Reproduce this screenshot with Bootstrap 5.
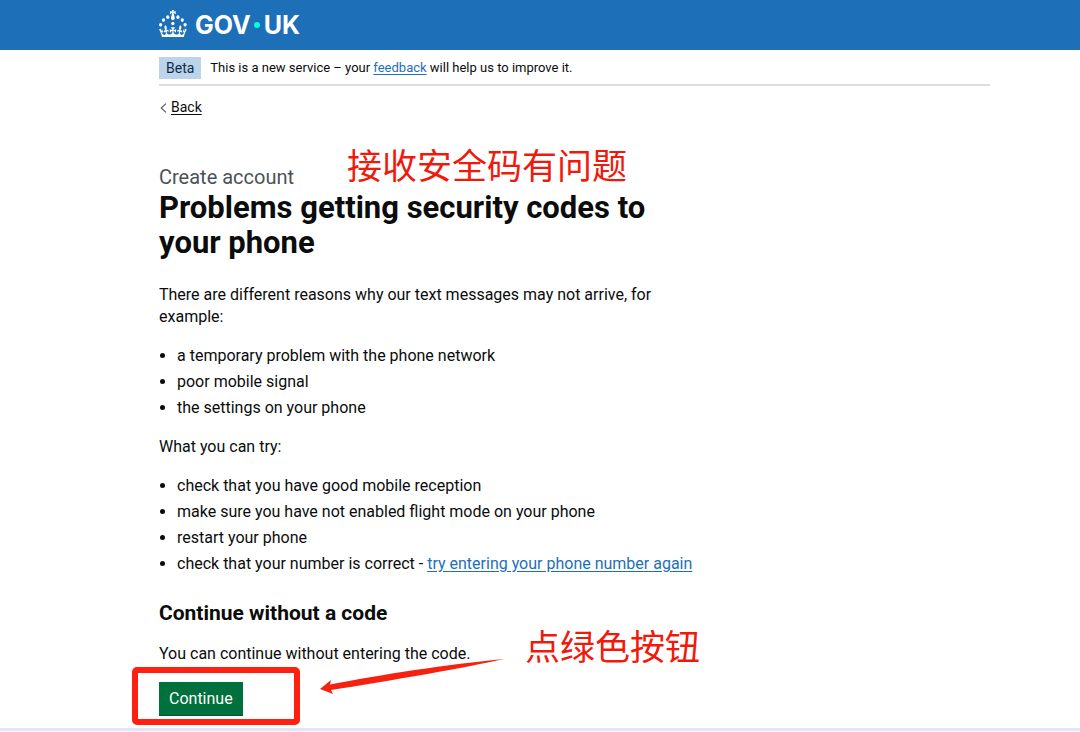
<!DOCTYPE html>
<html lang="en">
<head>
<meta charset="utf-8">
<meta name="viewport" content="width=device-width, initial-scale=1">
<title>Problems getting security codes to your phone – GOV.UK</title>
<link href="https://cdn.jsdelivr.net/npm/bootstrap@5.3.0/dist/css/bootstrap.min.css" rel="stylesheet">
<style>
  body { font-family: Roboto, "Noto Sans CJK SC", sans-serif; font-size: 16px; line-height: 22px; color: #0b0c0c; background: #fff; }
  a { color: #1d70b8; text-underline-offset: 2px; }
  .page-width { padding-left: 159px; padding-right: 90px; }
  .site-header { background: #1d70b8; height: 50px; }
  .site-logo { font: bold 25px/30px Inter, sans-serif; color: #fff; gap: 8px; }
  .site-logo svg { margin-bottom: 4px; }
  .logo-dot { width: 6px; height: 6px; background: #00ffe0; margin: 0 4px 0 3px; }
  .phase-banner { font-size: 13px; padding: 7px 0 5px; gap: 9px; border-bottom: 2px solid #dcdddd; }
  .phase-tag { background: #bbd4ea; color: #0c2d4a; font-size: 14px; padding: 0 7px; }
  .back-link { color: #0b0c0c; font-size: 14px; }
  .back-link svg { margin: 0 4px 0 1px; }
  .content-column { max-width: 530px; }
  .lead-caption { font-size: 20px; line-height: 26px; color: #4c5257; margin-top: 46px; }
  .page-title { font-size: 31px; line-height: 35px; font-weight: 700; max-width: 500px; margin-bottom: 24px; }
  .content-column p, .content-column ul { margin-bottom: 17px; }
  .intro-text { max-width: 500px; }
  .content-column ul { padding-left: 18px; }
  .content-column li + li { margin-top: 4px; }
  .section-title { font-size: 21px; line-height: 26px; font-weight: 700; padding-top: 8px; margin-bottom: 17px; }
  .btn-continue { --bs-btn-bg: #00703c; --bs-btn-color: #fff; --bs-btn-hover-bg: #005a30; --bs-btn-hover-color: #fff; --bs-btn-padding-x: 10px; --bs-btn-padding-y: 5px; --bs-btn-font-size: 16px; --bs-btn-line-height: 23px; --bs-btn-border-width: 0; box-shadow: 0 1px 0 #00542d; }
  .callout-box { left: -27px; top: -15px; width: 168px; height: 58px; border: 6px solid #fe2010; border-radius: 5px; pointer-events: none; }
  .callout-arrow { left: 160px; top: -26px; }
  .callout-note { font: 35px/40px "Noto Sans CJK SC", sans-serif; color: #f01a0c; white-space: nowrap; }
  .note-title { left: 188px; top: -20px; }
  .note-button { left: 366px; top: -57px; }
  .page-end { margin-top: 13px; height: 4px; background: #e3e7f5; border-bottom: 1px solid #f4f6fc; }
</style>
</head>
<body>
<header class="site-header page-width d-flex align-items-center">
  <a href="#" class="site-logo d-flex align-items-center text-decoration-none" aria-label="GOV.UK">
    <svg width="28" height="27" viewBox="0 3 64 55" fill="#fff" preserveAspectRatio="none" aria-hidden="true">
      <circle cx="20" cy="17.6" r="3.7"/><circle cx="10.2" cy="23.5" r="3.7"/><circle cx="3.7" cy="33.2" r="3.7"/><circle cx="31.7" cy="30.6" r="3.7"/><circle cx="43.3" cy="17.6" r="3.7"/><circle cx="53.2" cy="23.5" r="3.7"/><circle cx="59.7" cy="33.2" r="3.7"/>
      <path d="M33.1,9.8c.2-.1.3-.3.5-.5l4.6,2.4v-6.8l-4.6,1.5c-.1-.2-.3-.3-.5-.5l1.9-5.9h-6.7l1.9,5.9c-.2.1-.3.3-.5.5l-4.6-1.5v6.8l4.6-2.4c.1.2.3.3.5.5l-2.6,8c-.9,2.8,1.2,5.7,4.1,5.7h0c3,0,5.1-2.9,4.1-5.7l-2.6-8ZM37,37.9s-3.4,3.8-4.1,6.1c2.2,0,4.2-.5,6.4-2.8l-.7,8.5c-2-2.8-4.4-4.1-5.7-3.8.1,3.1.5,6.7,5.8,7.2,3.7.3,6.7-1.5,7-3.8.4-2.6-2-4.3-3.7-1.6-1.4-4.5,2.4-6.1,4.9-3.2-1.9-4.5-1.8-7.7,2.4-10.9,3,4,2.6,7.3-1.2,11.1,2.4-1.3,6.2,0,4,4.6-1.2-2.8-3.7-2.2-4.2.2-.3,1.7.7,3.7,3,4.2,1.9.3,4.7-.9,7-5.9-1.3,0-2.4.7-3.9,1.7l2.4-8c.6,2.3,1.4,3.7,2.2,4.5.6-1.6.5-2.8,0-5.3l5,1.8c-2.6,3.6-5.2,8.7-7.3,17.5-7.4-1.1-15.7-1.7-24.5-1.7h0c-8.8,0-17.1.6-24.5,1.7-2.1-8.9-4.7-13.9-7.3-17.5l5-1.8c-.5,2.5-.6,3.7,0,5.3.8-.8,1.6-2.3,2.2-4.5l2.4,8c-1.5-1-2.6-1.7-3.9-1.7,2.3,5,5.2,6.2,7,5.9,2.3-.4,3.3-2.4,3-4.2-.5-2.4-3-3.1-4.2-.2-2.2-4.6,1.6-6,4-4.6-3.7-3.7-4.2-7.1-1.2-11.1,4.2,3.2,4.3,6.4,2.4,10.9,2.5-2.8,6.3-1.3,4.9,3.2-1.8-2.7-4.1-1-3.7,1.6.3,2.3,3.3,4.1,7,3.8,5.4-.5,5.7-4.2,5.8-7.2-1.3-.2-3.7,1-5.7,3.8l-.7-8.5c2.2,2.3,4.2,2.7,6.4,2.8-.7-2.3-4.1-6.1-4.1-6.1h10.6,0Z"/>
    </svg>
    <span class="d-flex align-items-center">GOV<i class="logo-dot rounded-circle"></i>UK</span>
  </a>
</header>

<div class="page-width">
  <div class="phase-banner d-flex align-items-center">
    <strong class="phase-tag fw-normal">Beta</strong>
    <span>This is a new service – your <a href="#">feedback</a> will help us to improve it.</span>
  </div>
  <nav class="pt-2 mt-1 lh-sm" aria-label="Back">
    <a href="#" class="back-link d-inline-flex align-items-center text-decoration-none"><svg width="7" height="10" viewBox="0 0 7 10" fill="none" stroke="#505356" stroke-width="1.1" aria-hidden="true"><path d="M6 .7 1.2 5 6 9.3"/></svg><span class="text-decoration-underline">Back</span></a>
  </nav>

  <main class="content-column">
    <div class="lead-caption position-relative">Create account<span class="callout-note note-title position-absolute" lang="zh">接收安全码有问题</span></div>
    <h1 class="page-title">Problems getting security codes to your phone</h1>
    <p class="intro-text">There are different reasons why our text messages may not arrive, for example:</p>
    <ul>
      <li>a temporary problem with the phone network</li>
      <li>poor mobile signal</li>
      <li>the settings on your phone</li>
    </ul>
    <p>What you can try:</p>
    <ul class="text-nowrap">
      <li>check that you have good mobile reception</li>
      <li>make sure you have not enabled flight mode on your phone</li>
      <li>restart your phone</li>
      <li>check that your number is correct - <a href="#">try entering your phone number again</a></li>
    </ul>
    <h2 class="section-title">Continue without a code</h2>
    <p>You can continue without entering the code.</p>
    <div class="position-relative">
      <button type="button" class="btn btn-continue rounded-0">Continue</button>
      <div class="callout-box position-absolute"></div>
      <svg class="callout-arrow position-absolute" width="188" height="42" viewBox="0 0 188 42" aria-hidden="true"><path fill="#f4220f" d="M1 33 12 24 11 28.500C60 19 130 8 185 3C150 11 70 25 12 34L14 38Z"/></svg>
      <span class="callout-note note-button position-absolute" lang="zh">点绿色按钮</span>
    </div>
  </main>
</div>
<div class="page-end"></div>
<script src="https://cdn.jsdelivr.net/npm/bootstrap@5.3.0/dist/js/bootstrap.bundle.min.js"></script>
</body>
</html>
